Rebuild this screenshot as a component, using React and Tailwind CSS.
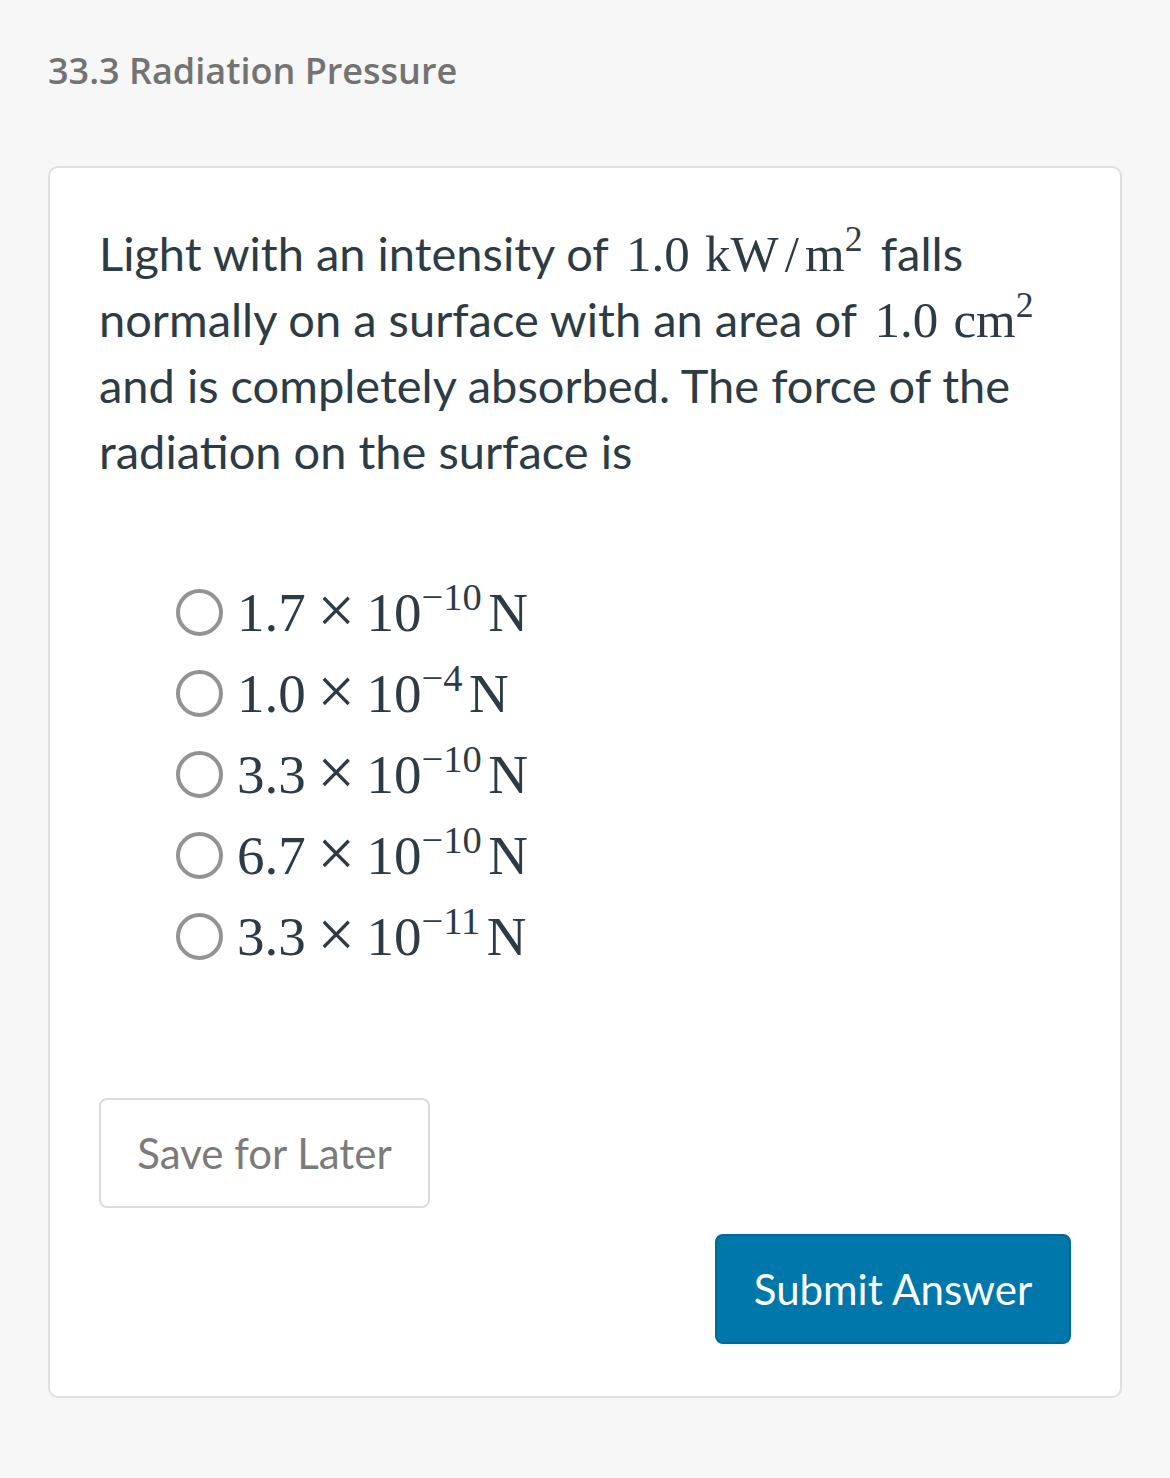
import React from "react";

const serif = { fontFamily: '"Liberation Serif", "Times New Roman", serif' };

function Sup({ children }) {
  return (
    <sup className="relative -top-[0.55em] align-baseline text-[0.7em] leading-[0]">
      {children}
    </sup>
  );
}

function Answer({ base, exp }) {
  return (
    <label className="flex h-[81px] items-center gap-[14px]">
      <span className="h-[47px] w-[47px] shrink-0 rounded-full border-4 border-[#939393] bg-white" />
      <span className="text-[55px] leading-none text-[#2d3b45]" style={serif}>
        {base}
        <span className="relative top-[2px] mx-[0.17em] text-[1.22em] leading-[0]">×</span>
        10
        <Sup>−{exp}</Sup>
        <span className="ml-[0.12em]">N</span>
      </span>
    </label>
  );
}

export default function App() {
  const answers = [
    ["1.7", "10"],
    ["1.0", "4"],
    ["3.3", "10"],
    ["6.7", "10"],
    ["3.3", "11"],
  ];

  return (
    <div
      className="min-h-[1478px] bg-[#f7f7f7] px-12 pt-[48px] pb-[80px]"
      style={{ fontFamily: 'Lato, "Open Sans", sans-serif' }}
    >
      {/* Heading */}
      <h1
        className="text-[36px] font-semibold leading-[46px] text-[#737373]"
        style={{ fontFamily: '"Open Sans", sans-serif' }}
      >
        33.3 Radiation Pressure
      </h1>

      {/* Question card */}
      <div className="mt-[72px] rounded-[10px] border-2 border-[#e0e0e0] bg-white px-[49px] pt-[52px] pb-[52px]">
        <p className="whitespace-nowrap text-[47px] leading-[66px] text-[#2d3b45]">
          Light with an intensity of{" "}
          <span className="mx-[0.12em] text-[51px] leading-none" style={serif}>
            1.0<span className="ml-[0.3em]">kW</span>
            <span className="mx-[0.12em]">/</span>m<Sup>2</Sup>
          </span>{" "}
          falls
          <br />
          normally on a surface with an area of{" "}
          <span className="mx-[0.12em] text-[51px] leading-none" style={serif}>
            1.0<span className="ml-[0.3em]">cm</span>
            <Sup>2</Sup>
          </span>
          <br />
          and is completely absorbed. The force of the
          <br />
          radiation on the surface is
        </p>

        <div className="mt-[88px] flex flex-col pl-[77px]">
          {answers.map(([base, exp], i) => (
            <Answer key={i} base={base} exp={exp} />
          ))}
        </div>

        <div className="mt-[121px] flex">
          <button className="h-[110px] w-[331px] rounded-[8px] border-2 border-[#dcdcdc] bg-white text-[42px] text-[#7b7b7b]">
            Save for Later
          </button>
        </div>

        <div className="mt-[26px] flex justify-end">
          <button className="h-[110px] w-[356px] rounded-[8px] border-2 border-[#006a96] bg-[#0077aa] text-[42px] text-white">
            Submit Answer
          </button>
        </div>
      </div>
    </div>
  );
}
